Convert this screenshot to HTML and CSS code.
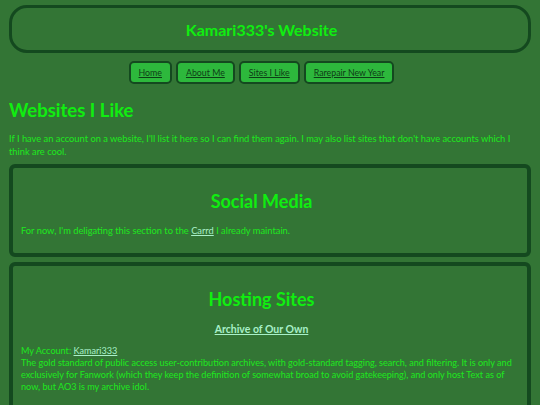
FILE: index.html
```html
<!DOCTYPE html>
<html>
<head>
<meta charset="utf-8">
<link rel="stylesheet" href="styles.css">
</head>
<body>
<header class="site-header">
  <h1 class="site-title">Kamari333's Website</h1>
</header>
<nav class="nav">
  <a class="nav-btn" href="#">Home</a>
  <a class="nav-btn" href="#">About Me</a>
  <a class="nav-btn" href="#">Sites I Like</a>
  <a class="nav-btn" href="#">Rarepair New Year</a>
</nav>
<main>
  <h1 class="page-title">Websites I Like</h1>
  <p class="intro">If I have an account on a website, I'll list it here so I can find them again. I may also list sites that don't have accounts which I think are cool.</p>
  <section class="card">
    <h2 class="card-title">Social Media</h2>
    <p>For now, I'm deligating this section to the <a class="link" href="#">Carrd</a> I already maintain.</p>
  </section>
  <section class="card">
    <h2 class="card-title">Hosting Sites</h2>
    <h3 class="site-name"><a class="link" href="#">Archive of Our Own</a></h3>
    <p class="tight">My Account: <a class="link" href="#">Kamari333</a><br>The gold standard of public access user-contribution archives, with gold-standard tagging, search, and filtering. It is only and exclusively for Fanwork (which they keep the definition of somewhat broad to avoid gatekeeping), and only host Text as of now, but AO3 is my archive idol.</p>
  </section>
</main>
</body>
</html>
```
FILE: styles.css
```css
html, body {
  margin: 0;
  padding: 0;
}
body {
  background: #337535;
  color: #1ee81e;
  font-family: "Comic Sans MS", "Lato", sans-serif;
  font-size: 9.3px;
  line-height: 13px;
  padding: 5px 9px;
}
.site-header {
  border: 3px solid #14491f;
  border-radius: 18px;
  height: 42px;
  display: flex;
  align-items: center;
  justify-content: center;
  padding-right: 17px;
}
.site-title {
  margin: 0;
  font-size: 16px;
  font-weight: bold;
  color: #10ee10;
}
.nav {
  display: flex;
  justify-content: center;
  gap: 4px;
  margin-top: 8px;
  padding-right: 17px;
}
.nav-btn {
  display: flex;
  align-items: center;
  height: 19px;
  padding: 0 8px;
  background: #2db83c;
  border: 2px solid #14491f;
  border-radius: 5px;
  color: #0d3d16;
  font-size: 8.8px;
}
.page-title {
  margin: 14px 0 0;
  font-size: 18.5px;
  line-height: 24px;
  color: #10ee10;
}
.intro {
  margin: 10px 0 6px;
}
.card {
  border: 4px solid #14491f;
  border-radius: 6px;
  padding: 21px 25px 16px 8px;
  margin-bottom: 5px;
}
.card-title {
  margin: 0 0 11px;
  text-align: center;
  font-size: 18px;
  line-height: 24px;
  color: #10ee10;
}
.card p {
  margin: 0;
}
.card p.tight {
  font-size: 9.1px;
  line-height: 12px;
  margin-right: -17px;
}
.site-name {
  margin: 0 0 9px;
  text-align: center;
  font-size: 10.5px;
  line-height: 14px;
}
.link {
  color: #a8f0c8;
}
```
